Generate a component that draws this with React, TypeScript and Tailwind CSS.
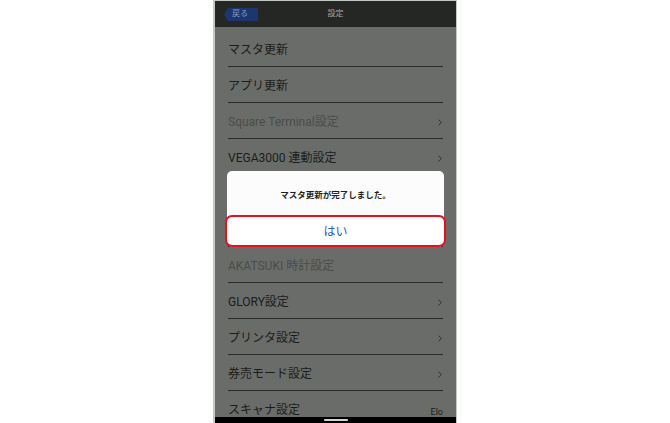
const font = "font-['Roboto','Noto_Sans_CJK_JP',sans-serif]";

type Row = { label: string; dim?: boolean; chevron?: boolean; right?: string };

const rows: Row[] = [
  { label: "マスタ更新" },
  { label: "アプリ更新" },
  { label: "Square Terminal設定", dim: true, chevron: true },
  { label: "VEGA3000 連動設定", chevron: true },
  { label: "" },
  { label: "" },
  { label: "AKATSUKI 時計設定", dim: true },
  { label: "GLORY設定", chevron: true },
  { label: "プリンタ設定", chevron: true },
  { label: "券売モード設定", chevron: true },
  { label: "スキャナ設定", right: "Elo" },
];

const chevronIcon = (
  <svg width="4" height="7" viewBox="0 0 4 7" fill="none">
    <path d="M0.5 0.5L3.3 3.5L0.5 6.5" stroke="#2b2c2b" strokeWidth="0.9" />
  </svg>
);

const backShape = (
  <svg className="absolute inset-0" width="34" height="13" viewBox="0 0 34 13">
    <path d="M0 6.5L4 0H34V13H4Z" fill="#1c3670" />
  </svg>
);

export default function App() {
  return (
    <div className={`w-full h-[423px] bg-white flex justify-center ${font}`}>
      <div className="w-[244px] h-full flex flex-col border-l-2 border-r border-t border-[#c6c7c5] overflow-hidden">
        {/* header */}
        <div className="h-[26px] shrink-0 bg-[#252725] grid grid-cols-[1fr_auto_1fr] items-center">
          <div className="pl-[9px]">
            <div className="relative w-[34px] h-[13px] flex items-center pl-[8px]">
              {backShape}
              <span className="relative text-[8px] leading-none text-[#8595bd]">戻る</span>
            </div>
          </div>
          <span className="text-[8px] leading-none text-[#a3a5a2]">設定</span>
          <div />
        </div>

        {/* list */}
        <div className="relative flex-1 bg-[#6a6c69] pt-[4px] overflow-hidden">
          {rows.map((r, i) => (
            <div
              key={i}
              className="mx-[13px] h-[36px] shrink-0 border-b border-[#282928] flex items-center justify-between pt-[3px]"
            >
              <span className={`text-[12px] leading-none ${r.dim ? "text-[#4a4c49]" : "text-[#1b1c1b]"}`}>
                {r.label}
              </span>
              {r.chevron && <span className="pr-[1px]">{chevronIcon}</span>}
              {r.right && <span className="text-[9px] leading-none text-[#1b1c1b] pt-[4px]">{r.right}</span>}
            </div>
          ))}

          {/* dialog */}
          <div className="absolute left-[12px] right-[12px] top-[144px] bg-[#fcfcfc] rounded-[5px] flex flex-col">
            <div className="h-[44px] flex items-center justify-center pt-[4px]">
              <span className="text-[8.5px] font-bold leading-none text-[#1e1e1e]">マスタ更新が完了しました。</span>
            </div>
            <div className="-mx-[2px] h-[32px] bg-white border-2 border-[#e8111b] rounded-[7px] flex items-center justify-center pt-[2px]">
              <span className="text-[12px] leading-none text-[#2b57c9]">はい</span>
            </div>
          </div>
        </div>

        {/* nav bar */}
        <div className="h-[6px] shrink-0 bg-black flex justify-center pt-[2px]">
          <div className="w-[24px] h-[2px] bg-[#d4d4d4] rounded-full" />
        </div>
      </div>
    </div>
  );
}
